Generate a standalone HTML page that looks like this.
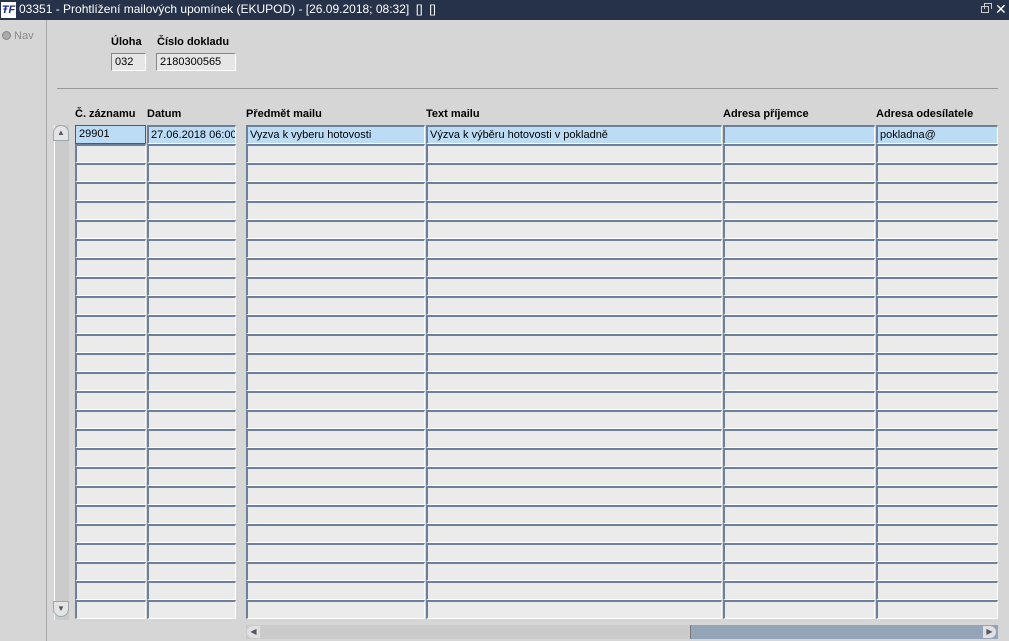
<!DOCTYPE html>
<html><head><meta charset="utf-8"><style>
*{margin:0;padding:0;box-sizing:border-box}
body{width:1009px;height:641px;overflow:hidden;background:#d6d6d6;font-family:"Liberation Sans",Arial,sans-serif;font-size:11px;color:#000;position:relative}
.a{position:absolute}
.title{left:0;top:0;width:1009px;height:20px;background:#263249;color:#fff;font-size:12px;line-height:19px;padding-left:19px}
.logo{left:1px;top:2px;width:15px;height:16px;background:#fff;color:#1a2a9a;font-weight:bold;font-style:italic;font-size:11px;line-height:16px;text-align:center}
.side{left:0;top:20px;width:47px;height:621px;background:#d6d6d6;border-right:1px solid #a8a8a8}
.lbl{font-weight:bold;font-size:11px}
.f{height:19px;background:#ebebeb;border-top:2px solid #6c7f9b;border-left:2px solid #6c7f9b;border-bottom:1px solid #fff;border-right:1px solid #fff;padding-left:2px;line-height:16px;overflow:hidden;white-space:nowrap}
.hl{background:#bcdcf6}
.red{border:1px solid #e02020 !important;padding-left:3px;line-height:17px}
.ro{background:#e6e6e6;border-top:1px solid #888;border-left:1px solid #888;border-bottom:1px solid #fff;border-right:1px solid #fff;padding-left:3px;line-height:17px;height:18px}
</style></head><body>
<div class="a title">03351 - Prohtlížení mailových upomínek (EKUPOD) - [26.09.2018; 08:32]&nbsp; []&nbsp; []</div>
<div class="a logo">ŦF</div>
<div class="a" style="left:981px;top:6px;width:8px;height:7px;border:1px solid #ccc"></div>
<div class="a" style="left:984px;top:3px;width:8px;height:6px;border:1px solid #ccc;border-bottom:none"></div>
<div class="a" style="left:995px;top:0;color:#fff;font-size:14px;line-height:19px">✕</div>
<div class="a side"></div>
<div class="a" style="left:2px;top:30px;width:32px;height:14px;color:#888;font-size:11px;line-height:12px"><span style="display:inline-block;width:9px;height:9px;border-radius:50%;background:#aaa;border:1px solid #888;vertical-align:-1px"></span> Nav</div>
<div class="a lbl" style="left:111px;top:36px">Úloha</div>
<div class="a lbl" style="left:157px;top:36px">Číslo dokladu</div>
<div class="a ro" style="left:111px;top:53px;width:35px">032</div>
<div class="a ro" style="left:156px;top:53px;width:80px">2180300565</div>
<div class="a" style="left:57px;top:88px;width:941px;height:1px;background:#999"></div>
<div class="a lbl" style="left:75px;top:108px">Č. záznamu</div>
<div class="a lbl" style="left:147px;top:108px">Datum</div>
<div class="a lbl" style="left:246px;top:108px">Předmět mailu</div>
<div class="a lbl" style="left:426px;top:108px">Text mailu</div>
<div class="a lbl" style="left:723px;top:108px">Adresa příjemce</div>
<div class="a lbl" style="left:876px;top:108px">Adresa odesílatele</div>
<div class="a" style="left:54px;top:125px;width:15px;height:495px;background:#cbcbcb;border-left:1px solid #fff"></div>
<div class="a" style="left:53px;top:125px;width:16px;height:16px;border:1px solid #9aa;border-radius:8px 8px 0 0;background:#e4e4e4;text-align:center;font-size:8px;color:#556;line-height:14px">▲</div>
<div class="a" style="left:53px;top:601px;width:16px;height:16px;border:1px solid #9aa;border-radius:0 0 8px 8px;background:#e4e4e4;text-align:center;font-size:8px;color:#556;line-height:14px">▼</div>
<div id="g"></div>
<div class="a" style="left:246px;top:625px;width:752px;height:14px;background:#95a5b8"></div>
<div class="a" style="left:246px;top:625px;width:445px;height:14px;background:#cbcbcb;border-right:1px solid #777"></div>
<div class="a" style="left:247px;top:626px;width:13px;height:12px;background:#e0e0e0;border-radius:6px 0 0 6px;font-size:8px;line-height:12px;text-align:center;color:#556">◀</div>
<div class="a" style="left:983px;top:626px;width:13px;height:12px;background:#e0e0e0;border-radius:0 6px 6px 0;font-size:8px;line-height:12px;text-align:center;color:#556">▶</div>
<script>
var cols=[[75,71],[147,89],[246,179],[426,296],[723,152],[876,122]];
var t=["29901","27.06.2018 06:00","Vyzva k vyberu hotovosti","Výzva k výběru hotovosti v pokladně","","pokladna@"];
var h="";
for(var r=0;r<26;r++){for(var c=0;c<6;c++){var x=cols[c][0],w=cols[c][1];if(x+w>998)w=998-x;
var s="left:"+x+"px;top:"+(125+r*19)+"px;width:"+w+"px;";
var cl="a f"+(r==0?" hl":"")+(r==0&&c==0?" red":"");
h+='<div class="'+cl+'" style="'+s+'">'+(r==0?t[c]:"")+'</div>';}}
document.getElementById("g").innerHTML=h;
</script>
</body></html>
